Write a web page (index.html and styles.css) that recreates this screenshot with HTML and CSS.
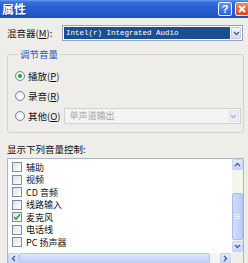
FILE: index.html
```html
<!DOCTYPE html>
<html lang="zh">
<head>
<meta charset="utf-8">
<link rel="stylesheet" href="styles.css">
</head>
<body>
<div class="titlebar">
  <span class="title">属性</span>
  <span class="tb-btn help">?</span>
  <span class="tb-btn close"><svg width="10" height="10" viewBox="0 0 10 10"><path d="M2 2 L8 8 M8 2 L2 8" stroke="#fff" stroke-width="2"/></svg></span>
</div>
<div class="content">
  <div class="mixer-row">
    <span class="mixer-label">混音器(<u>M</u>):</span>
    <div class="select">
      <span class="select-value">Intel(r) Integrated Audio</span>
      <span class="select-btn"><svg width="7" height="5" viewBox="0 0 7 5"><polyline points="1,1 3.5,3.5 6,1" fill="none" stroke="#4d6185" stroke-width="1.4"/></svg></span>
    </div>
  </div>
  <fieldset class="group">
    <legend class="group-title">调节音量</legend>
    <div class="radio-row"><span class="radio checked"></span><span>播放(<u>P</u>)</span></div>
    <div class="radio-row"><span class="radio"></span><span>录音(<u>R</u>)</span></div>
    <div class="radio-row"><span class="radio"></span><span class="other-label">其他(<u>O</u>)</span>
      <div class="select disabled">
        <span class="select-value">单声道输出</span>
        <span class="select-btn"><svg width="7" height="5" viewBox="0 0 7 5"><polyline points="1,1 3.5,3.5 6,1" fill="none" stroke="#a9b6cf" stroke-width="1.4"/></svg></span>
      </div>
    </div>
  </fieldset>
  <div class="list-label">显示下列音量控制:</div>
  <div class="listbox">
    <div class="items">
      <div class="item"><span class="check"></span><span>辅助</span></div>
      <div class="item"><span class="check"></span><span>视频</span></div>
      <div class="item"><span class="check"></span><span>CD 音频</span></div>
      <div class="item"><span class="check"></span><span>线路输入</span></div>
      <div class="item"><span class="check checked"><svg width="8" height="8" viewBox="0 0 8 8"><polyline points="1,4 3,6 7,1.5" fill="none" stroke="#21a121" stroke-width="1.6"/></svg></span><span>麦克风</span></div>
      <div class="item"><span class="check"></span><span>电话线</span></div>
      <div class="item"><span class="check"></span><span>PC 扬声器</span></div>
    </div>
    <div class="vscroll">
      <span class="sb-btn"><svg width="7" height="5" viewBox="0 0 7 5"><polyline points="1,4 3.5,1.5 6,4" fill="none" stroke="#4d6185" stroke-width="1.4"/></svg></span>
      <span class="vgap"></span>
      <span class="vthumb"><i></i><i></i><i></i></span>
      <span class="vgap2"></span>
      <span class="sb-btn"><svg width="7" height="5" viewBox="0 0 7 5"><polyline points="1,1 3.5,3.5 6,1" fill="none" stroke="#4d6185" stroke-width="1.4"/></svg></span>
    </div>
    <div class="hscroll">
      <span class="sb-btn"><svg width="5" height="7" viewBox="0 0 5 7"><polyline points="4,1 1.5,3.5 4,6" fill="none" stroke="#4d6185" stroke-width="1.4"/></svg></span>
      <span class="hthumb"></span>
      <span class="sb-btn"><svg width="5" height="7" viewBox="0 0 5 7"><polyline points="1,1 3.5,3.5 1,6" fill="none" stroke="#4d6185" stroke-width="1.4"/></svg></span>
    </div>
    <div class="corner"></div>
  </div>
</div>
</body>
</html>
```

FILE: styles.css
```css
html, body {
  margin: 0;
  padding: 0;
}
body {
  width: 248px;
  height: 263px;
  overflow: hidden;
  background: #eeede9;
  font-family: "Noto Sans CJK SC", "Liberation Sans", sans-serif;
  font-size: 9.5px;
  line-height: 12px;
  color: #111;
}
u { text-decoration: underline; }

.titlebar {
  height: 18px;
  display: flex;
  align-items: center;
  padding-left: 2px;
  background: linear-gradient(#6a9cf0 0, #3a72dc 2px, #2a60cf 7px, #2659c8 14px, #1e4fb8 18px);
  color: #fff;
  font-weight: bold;
  font-size: 12px;
}
.title {
  flex: 1;
  text-shadow: 1px 1px 0 #1a3c8c;
}
.tb-btn {
  width: 14px;
  height: 14px;
  box-sizing: border-box;
  border: 1px solid #f0f4ff;
  border-radius: 2px;
  display: flex;
  align-items: center;
  justify-content: center;
  font-family: "Liberation Sans", sans-serif;
  font-size: 11px;
  font-weight: bold;
  line-height: 12px;
}
.help {
  background: linear-gradient(#5e94f5, #2a63da);
  margin-right: 3px;
}
.close {
  background: linear-gradient(#f08a5c, #d6471f);
  margin-right: -1px;
}

.content {
  padding: 7px 4px 0 7px;
}
.mixer-row {
  display: flex;
  align-items: center;
  height: 16px;
}
.mixer-label {
  width: 55px;
  white-space: nowrap;
}
.select {
  width: 181px;
  height: 16px;
  box-sizing: border-box;
  border: 1px solid #8ea4c1;
  background: #fff;
  display: flex;
  padding: 1px;
  flex: none;
}
.select-value {
  flex: 1;
  background: #1b4f92;
  color: #fff;
  font-family: "Liberation Mono", monospace;
  font-size: 7.5px;
  line-height: 12px;
  padding-left: 2px;
  white-space: nowrap;
  overflow: hidden;
}
.select-btn {
  width: 10px;
  margin-left: 1px;
  display: flex;
  align-items: center;
  justify-content: center;
  background: linear-gradient(#f2f4fa, #d5dcec);
  border: 1px solid #c4cde0;
  box-sizing: border-box;
  border-radius: 1px;
}
.select.disabled {
  width: 177px;
  margin-left: auto;
  margin-right: 4px;
  border-color: #cfd2d6;
  background: #f4f4f2;
}
.select.disabled .select-value {
  background: transparent;
  color: #a6a6a6;
  font-family: "Noto Sans CJK SC", sans-serif;
  font-size: 9px;
  padding-left: 4px;
}
.select.disabled .select-btn {
  background: #e8ecf4;
  border-color: #dde2ec;
}

.group {
  margin: 8px 0 0 0;
  padding: 6px 0 6px 7px;
  border: 1px solid #d3d3c8;
  border-radius: 3px;
  min-width: 0;
}
.group-title {
  padding: 0 2px;
  margin-left: 3px;
  color: #2a58c0;
  line-height: 11px;
}
.radio-row {
  display: flex;
  align-items: center;
  height: 20px;
  gap: 3px;
}
.radio {
  width: 10px;
  height: 10px;
  flex: none;
  box-sizing: border-box;
  border: 1px solid #6d87ac;
  border-radius: 50%;
  background: radial-gradient(circle at 60% 60%, #ffffff, #e2e2dc);
  display: flex;
  align-items: center;
  justify-content: center;
}
.radio.checked::after {
  content: "";
  width: 4px;
  height: 4px;
  border-radius: 50%;
  background: #2ba52b;
}
.other-label {
  white-space: nowrap;
}

.list-label {
  margin-top: 10px;
  height: 12px;
}
.listbox {
  margin-top: 3px;
  width: 237px;
  box-sizing: border-box;
  border: 1px solid #a7b7cc;
  background: #fff;
  display: grid;
  grid-template-columns: 1fr 11px;
  grid-template-rows: 94px 11px;
}
.items {
  padding-top: 2px;
  overflow: hidden;
}
.item {
  height: 12.5px;
  display: flex;
  align-items: center;
  padding-left: 4px;
  gap: 4px;
  font-size: 9px;
  line-height: 11px;
}
.check {
  width: 10px;
  height: 10px;
  flex: none;
  box-sizing: border-box;
  border: 1px solid #7a8ea8;
  background: linear-gradient(135deg, #e2e2dc, #ffffff);
  display: flex;
  align-items: center;
  justify-content: center;
}

.vscroll {
  display: flex;
  flex-direction: column;
  background: #f5f4ef;
}
.sb-btn {
  width: 11px;
  height: 11px;
  box-sizing: border-box;
  border: 1px solid #c3d2f3;
  border-radius: 2px;
  background: linear-gradient(#e3ebfd, #c5d5fa);
  display: flex;
  align-items: center;
  justify-content: center;
  flex: none;
}
.vgap { height: 23px; flex: none; }
.vgap2 { height: 1px; flex: none; }
.vthumb {
  height: 47px;
  flex: none;
  box-sizing: border-box;
  border: 1px solid #a9bcea;
  border-radius: 2px;
  background: linear-gradient(90deg, #cfdcfc, #bccdf7);
  display: flex;
  flex-direction: column;
  align-items: center;
  justify-content: center;
  gap: 1px;
}
.vthumb i {
  display: block;
  width: 5px;
  height: 1px;
  background: #eef3ff;
}
.hscroll {
  display: flex;
  align-items: center;
  background: #f5f4ef;
}
.hthumb {
  width: 191px;
  height: 11px;
  box-sizing: border-box;
  border: 1px solid #b4c7f2;
  border-radius: 2px;
  background: linear-gradient(#dbe5fd, #bccdf7);
  margin-right: 10px;
}
.corner {
  background: #eeede9;
}
```
